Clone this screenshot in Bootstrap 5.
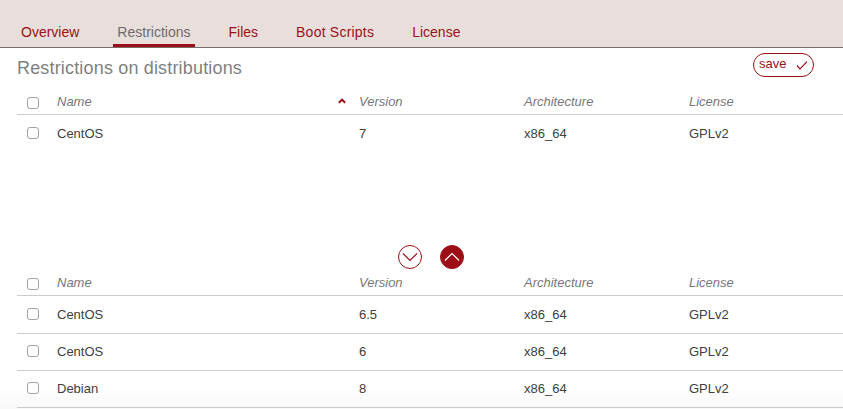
<!DOCTYPE html>
<html lang="en">
<head>
<meta charset="utf-8">
<meta name="viewport" content="width=device-width, initial-scale=1">
<title>Restrictions</title>
<link href="https://cdn.jsdelivr.net/npm/bootstrap@5.3.0/dist/css/bootstrap.min.css" rel="stylesheet">
<style>
  :root { --brand: #9c0f17; }
  body { font-family: "Liberation Sans", Arial, sans-serif; font-size: 13px; color: #404040; height: 409px;
         background: linear-gradient(#fff 0, #fff 384px, #f9f9f9 409px); }
  .topbar { height: 48px; background: #e8dfdd; border-bottom: 1px solid #7b6c6c; padding-left: 17px; }
  .topbar .nav { gap: 30px; }
  .topbar .nav-link { font-size: 14px; line-height: 16px; padding: 0 4px 4px; border-bottom: 3px solid transparent; color: var(--brand); }
  .topbar .nav-link.active { color: #6f6a69; border-color: var(--brand); }
  .topbar .nav-link.spaced { letter-spacing: .22px; }
  main { padding-left: 17px; }
  .titlebar { height: 42px; padding: 5px 29px 0 0; }
  h1 { font-size: 18px; line-height: 20px; letter-spacing: .17px; color: #7f7f7f; padding-top: 5px; }
  .btn-save { width: 61px; height: 24px; padding: 0 5px; border: 1px solid var(--brand); border-radius: 12px; color: var(--brand); font-size: 13px; line-height: 20px; }
  .btn-save svg { margin-top: 4.5px; }
  .upper { height: 154px; }
  .grid-list { table-layout: fixed; border-collapse: separate; border-spacing: 0; --bs-table-bg: transparent; --bs-table-color: #404040; }
  .grid-list > :not(caption) > * > * { padding: 10px 0 0; line-height: 15px; height: 37px; vertical-align: top; border-bottom: 1px solid #ccc; }
  .grid-list > thead > tr > th { height: 25px; padding-top: 4px; font-weight: 400; font-style: italic; color: #777; }
  .grid-list > tbody > tr:first-child > td { height: 38px; padding-top: 11px; }
  .upper .grid-list > tbody > tr > td { border-bottom: 0; }
  .c-check { width: 40px; } .c-name { width: 302px; } .c-mid { width: 165px; }
  .grid-list .form-check-input { width: 12px; height: 12px; margin: 1px 0 0 10px; border: 1px solid #a2a2a2; border-radius: 3px; background-color: #fff; }
  .grid-list thead .form-check-input { margin-top: 3px; }
  .sort { margin: 4px 13px 0 0; }
  .moves { height: 27px; gap: 18px; padding-left: 381px; }
  .btn-move { width: 24px; height: 24px; border: 1px solid var(--brand); color: var(--brand); margin-top: 1px; }
  .btn-move.filled { background: var(--brand); color: #fff; }
</style>
<script src="https://cdn.jsdelivr.net/npm/bootstrap@5.3.0/dist/js/bootstrap.bundle.min.js"></script>
</head>
<body class="overflow-hidden">
<header class="topbar d-flex align-items-end">
  <ul class="nav">
    <li class="nav-item"><a class="nav-link" href="#">Overview</a></li>
    <li class="nav-item"><a class="nav-link active" href="#">Restrictions</a></li>
    <li class="nav-item"><a class="nav-link" href="#">Files</a></li>
    <li class="nav-item"><a class="nav-link spaced" href="#">Boot Scripts</a></li>
    <li class="nav-item"><a class="nav-link" href="#">License</a></li>
  </ul>
</header>
<main>
  <div class="titlebar d-flex justify-content-between align-items-start">
    <h1 class="fw-normal m-0">Restrictions on distributions</h1>
    <button class="btn btn-save d-flex justify-content-between align-items-start" type="button">save
      <svg width="12" height="12" viewBox="0 0 12 12" fill="none" stroke="currentColor" stroke-width="1.2"><path d="M1 6.5 4 9.9 11 2.6"/></svg>
    </button>
  </div>
  <section class="upper">
    <table class="table grid-list m-0">
      <colgroup><col class="c-check"><col class="c-name"><col class="c-mid"><col class="c-mid"><col></colgroup>
      <thead><tr>
        <th><input class="form-check-input d-block" type="checkbox" aria-label="Select all"></th>
        <th><div class="d-flex justify-content-between align-items-start">Name
          <svg class="sort" width="8" height="6" viewBox="0 0 8 6" fill="none" stroke="#9c0f17" stroke-width="2"><path d="M.8 4.8 4 1.7l3.2 3.1"/></svg></div></th>
        <th>Version</th><th>Architecture</th><th>License</th>
      </tr></thead>
      <tbody>
        <tr><td><input class="form-check-input d-block" type="checkbox" aria-label="Select"></td><td>CentOS</td><td>7</td><td>x86_64</td><td>GPLv2</td></tr>
      </tbody>
    </table>
  </section>
  <div class="moves d-flex align-items-start">
    <button class="btn btn-move rounded-circle p-0 d-flex align-items-center justify-content-center" type="button" aria-label="Move down">
      <svg width="16" height="10" viewBox="0 0 16 10" fill="none" stroke="currentColor" stroke-width="1.2"><path d="M1 1.5l7 7 7-7"/></svg>
    </button>
    <button class="btn btn-move filled rounded-circle p-0 d-flex align-items-center justify-content-center" type="button" aria-label="Move up">
      <svg width="16" height="10" viewBox="0 0 16 10" fill="none" stroke="currentColor" stroke-width="1.2"><path d="M1 8.5l7-7 7 7"/></svg>
    </button>
  </div>
  <section>
    <table class="table grid-list m-0">
      <colgroup><col class="c-check"><col class="c-name"><col class="c-mid"><col class="c-mid"><col></colgroup>
      <thead><tr>
        <th><input class="form-check-input d-block" type="checkbox" aria-label="Select all"></th>
        <th>Name</th><th>Version</th><th>Architecture</th><th>License</th>
      </tr></thead>
      <tbody>
        <tr><td><input class="form-check-input d-block" type="checkbox" aria-label="Select"></td><td>CentOS</td><td>6.5</td><td>x86_64</td><td>GPLv2</td></tr>
        <tr><td><input class="form-check-input d-block" type="checkbox" aria-label="Select"></td><td>CentOS</td><td>6</td><td>x86_64</td><td>GPLv2</td></tr>
        <tr><td><input class="form-check-input d-block" type="checkbox" aria-label="Select"></td><td>Debian</td><td>8</td><td>x86_64</td><td>GPLv2</td></tr>
      </tbody>
    </table>
  </section>
</main>
</body>
</html>
